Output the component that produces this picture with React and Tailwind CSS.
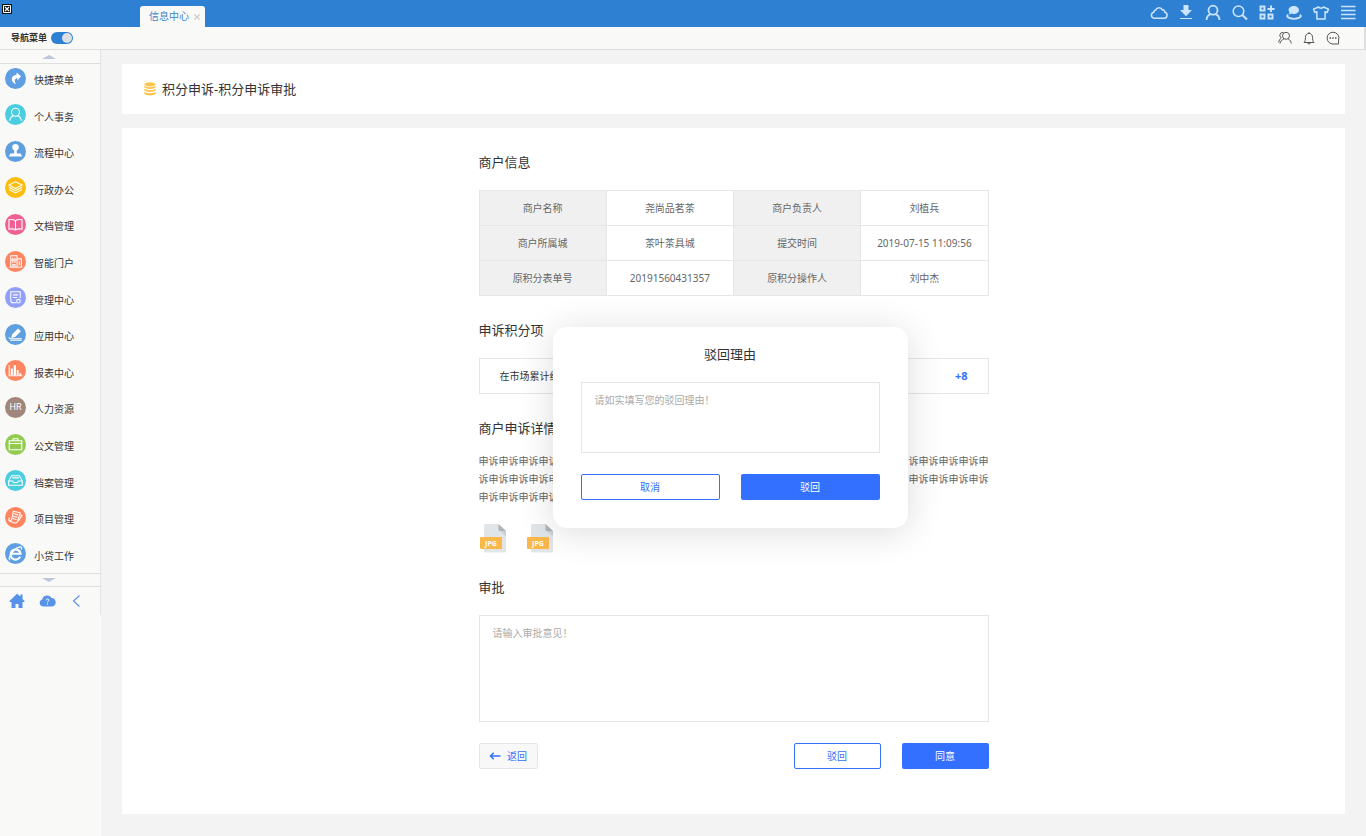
import { useState } from "react";

const ICON = "w-5 h-5";

const topActions = [
  {
    name: "云盘",
    art: (
      <path
        d="M5.2 15.200h9.900a3 3 0 0 0 .7-5.900 2 2 0 0 0-2.400-2.400A3.600 3.600 0 0 0 6.700 7a2.600 2.600 0 0 0-2 2.300 3 3 0 0 0 .5 5.900z"
        fill="none" strokeWidth="1.5"
      />
    ),
  },
  {
    name: "下载",
    art: (
      <>
        <path d="M7.5 2h5v5H16l-6 6.200L4 7h3.500z" fill="currentColor" stroke="none" />
        <path d="M4 15.500h12" fill="none" strokeWidth="1" />
      </>
    ),
  },
  {
    name: "用户",
    art: (
      <>
        <circle cx="10" cy="7.2" r="4.5" fill="none" strokeWidth="1.8" />
        <path d="M3.500 17c.2-3.200 1.900-5.200 4-5.700M16.500 17c-.2-3.200-1.900-5.200-4-5.700" fill="none" strokeWidth="1.8" />
      </>
    ),
  },
  {
    name: "搜索",
    art: (
      <>
        <circle cx="8.500" cy="8.300" r="5.300" fill="none" strokeWidth="1.5" />
        <path d="M12.500 12.300l4.500 4.200" fill="none" strokeWidth="2" />
      </>
    ),
  },
  {
    name: "应用",
    art: (
      <path
        d="M3.500 3.500h4v4h-4zM3.500 11.500h4v4h-4zM11.500 11.500h4v4h-4zM14 2.500v6.500M10.500 6h7"
        fill="none" strokeWidth="1.9"
      />
    ),
  },
  {
    name: "消息",
    art: (
      <>
        <path d="M9.800 3c3 0 5.200 1.700 5.200 4s-2.200 4-5.200 4c-.8 0-1.500-.1-2.200-.4l-3 .9 1-2A3.700 3.700 0 0 1 4.600 7c0-2.300 2.200-4 5.200-4z" fill="currentColor" stroke="none" />
        <path d="M4.200 11.800c-1.500.9-1.200 2 .4 2.800 3 1.400 7.800 1.400 10.800 0 1.600-.8 1.900-1.900.4-2.800" fill="none" strokeWidth="1.9" />
      </>
    ),
  },
  {
    name: "皮肤",
    art: (
      <path
        d="M7.400 4L2.500 6.200l1.400 3.300 2-.7V16h8.200V8.800l2 .7 1.400-3.300L12.600 4c-.9 1.500-4.300 1.500-5.200 0z"
        fill="none" strokeWidth="1.500" strokeLinejoin="round"
      />
    ),
  },
  {
    name: "菜单",
    art: <path d="M3 3.500h14.500M3 7.500h14.500M3 11.500h14.500M3 15.500h14.500" fill="none" strokeWidth="1.600" />,
  },
];

const subActions = [
  {
    name: "联系人",
    art: (
      <>
        <circle cx="11" cy="7.800" r="3.500" />
        <path d="M5 15.500c.3-2 1.700-3.700 4-4.500M13.200 11c2 .8 3 2.600 3 4.500M8.500 4.700C6.300 4 4.800 5.500 4.900 7.500c0 1 .6 2 1.400 2.500C4.900 11 3.900 12.600 3.700 14.500" />
      </>
    ),
  },
  {
    name: "提醒",
    art: (
      <path d="M5 14.500h10c-1.300-1.200-1.300-2.700-1.400-5-.1-2.600-1.500-4.100-3.600-4.100S6.500 6.900 6.400 9.500c-.1 2.300-.1 3.800-1.400 5zM8.600 14.900c.2 1.500 2.600 1.500 2.800 0M10 4v1.200" />
    ),
  },
  {
    name: "聊天",
    art: (
      <>
        <path d="M10 4.200a5.900 5.900 0 1 0 0 11.800h5.600v-4A5.900 5.900 0 0 0 10 4.200z" />
        <path d="M6.500 9.200H8v1.500H6.500zM9.200 9.200h1.500v1.500H9.200zM12 9.200h1.500v1.500H12z" fill="currentColor" stroke="none" />
      </>
    ),
  },
];

// artwork sits inside a 20x20 disc
const menu = [
  { label: "快捷菜单", bg: "bg-[#5e9fe3]", art: <path d="M11 4.200l4.300 3.600-3.500 4V9.500c-2.600.4-3.200 2.500-1.300 6-5.600-1.700-5.400-8.300.5-9z" fill="#fff" stroke="none" /> },
  { label: "个人事务", bg: "bg-[#4bcde0]", art: <><circle cx="10" cy="7.800" r="3.800" /><path d="M4.500 16c.2-2.600 1.500-4.300 3.500-4.900M15.500 16c-.2-2.600-1.500-4.300-3.500-4.900" /></> },
  { label: "流程中心", bg: "bg-[#5e9fe0]", art: <><circle cx="10" cy="6" r="3.100" fill="#fff" stroke="none" /><path d="M9 8h2l.4 4H15l1.200 2.800H3.800L5 12h3.600z" fill="#fff" stroke="none" /></> },
  { label: "行政办公", bg: "bg-[#fdbd0c]", art: <path d="M10 4.500l6.300 3.200L10 11 3.700 7.700zM3.700 9.700L10 13l6.300-3.300M3.700 11.900L10 15.200l6.300-3.300" /> },
  { label: "文档管理", bg: "bg-[#ef6093]", art: <path d="M10 6.300C8.200 5 5.800 5 3.800 5.500v9c2-.5 4.400-.5 6.200.7 1.800-1.200 4.200-1.200 6.200-.7v-9C14.200 5 11.800 5 10 6.300zM10 6.300v8.900" /> },
  { label: "智能门户", bg: "bg-[#ff8460]", art: <path d="M5.500 15.500v-11h6v11M11.500 7.500h4v8M4 15.500h12.500M7.500 6.500v5M9.500 6.500v5M6 8.500h5M7.500 15v-2h2v2M13.500 9.500v4" /> },
  { label: "管理中心", bg: "bg-[#909ffb]", art: <><path d="M14.500 10.500v-6h-9v8c0 1.600.8 2.500 2.300 2.500h3M7.500 7.500h5M7.500 10h4" /><circle cx="12.800" cy="13.500" r="1.700" /></> },
  { label: "应用中心", bg: "bg-[#5e9fe0]", art: <><path d="M12.400 4.200l2.800 2.700-5.500 5.500-3.800 1 1-3.700z" fill="#fff" stroke="none" /><path d="M4 12.500c-.5 2 1.500 1.500 3 1.500h9M5 15.500h11" /></> },
  { label: "报表中心", bg: "bg-[#ff8460]", art: <><path d="M4 5v10h12.500" /><path d="M5.500 8h2v6.500h-2zM8.300 5h2.200v9.500H8.300zM11.200 9.500H13v5h-1.800zM13.700 12.500h1.700v2h-1.700z" fill="#fff" stroke="none" /></> },
  { label: "人力资源", bg: "bg-[#a1867c]", text: "HR" },
  { label: "公文管理", bg: "bg-[#93cb50]", art: <path d="M4 6.500h12v8.500H4zM4 9h12M7.700 6.300V4.500h4.600v1.800" /> },
  { label: "档案管理", bg: "bg-[#4bcde0]", art: <path d="M6.200 5.500h7.600l2.700 5v4h-13v-4zM3.700 10.500h3.600c.5 2 4.900 2 5.400 0h3.600M6.800 7.500h6.400" /> },
  { label: "项目管理", bg: "bg-[#ff8460]", art: <path d="M8 4l6.500 1.500-2.500 8c-.6 1.900-2 1.900-3.500 1.400l-5-1.700c1.800.2 2.700-.8 3-2zM8.500 6.500l4 1M7.800 8.700l4 1M7.200 10.900l3.800 1M4 10l-.5 3.200M12.500 13.500L16.200 8l-1.500-.6" /> },
  { label: "小贷工作", bg: "bg-[#5e9fe3]", art: <><path d="M14.500 13a4.800 4.800 0 1 1 .4-2.700H6.500" strokeWidth="2" /><path d="M4.800 16.200C2 15.500 7.500 6 13.500 4c2.200-.7 2.700.5 2 2.300" strokeWidth="1.200" /></> },
];

const merchant = [
  ["商户名称", "尧尚品茗茶", "商户负责人", "刘植兵"],
  ["商户所属城", "茶叶茶具城", "提交时间", "2019-07-15 11:09:56"],
  ["原积分表单号", "20191560431357", "原积分操作人", "刘中杰"],
];

const detail = "申诉".repeat(55);

function TopBar() {
  return (
    <header className="flex h-[27px] items-start justify-between bg-[#2e80d2] pr-2">
      <div className="flex h-full">
        <div className="w-[140px] pt-1 pl-[2px]">
          <svg viewBox="0 0 10 10" className="h-[10px] w-[10px]" aria-hidden="true">
            <path d="M0 0h10v10H0z" fill="#111" />
            <path d="M1.500 1.500h7v7h-7z" fill="none" stroke="#fff" />
            <path d="M3 3l4 4M7 3L3 7" stroke="#fff" strokeWidth="1.2" />
          </svg>
        </div>
        <div className="mt-[6px] flex w-[65px] items-center justify-between rounded-t-[3px] bg-[#f9f9f7] pr-[5px] pl-[9px]">
          <a href="#info" className="text-[10px] whitespace-nowrap text-[#3d84d0]">信息中心</a>
          <button type="button" aria-label="关闭" className="text-[#cccccc]">
            <svg viewBox="0 0 6 6" className="h-[6px] w-[6px]">
              <path d="M.5.5l5 5M5.500.5l-5 5" stroke="currentColor" strokeWidth="1.2" />
            </svg>
          </button>
        </div>
      </div>
      <div className="flex gap-[7px] pt-[3px] text-[#cbe5ff]">
        {topActions.map((a) => (
          <button key={a.name} type="button" aria-label={a.name}>
            <svg viewBox="0 0 20 20" className={ICON} stroke="currentColor">{a.art}</svg>
          </button>
        ))}
      </div>
    </header>
  );
}

function SubBar() {
  const [on, setOn] = useState(true);
  return (
    <div className="flex h-[23px] items-center justify-between border-r-2 border-b border-r-[#dedede] border-b-[#dedede] bg-[#f9f9f7] pr-[21px] pl-[11px]">
      <label className="flex items-center gap-1 text-[9px] font-bold text-[#333]">
        导航菜单
        <input
          type="checkbox"
          checked={on}
          onChange={(e) => setOn(e.target.checked)}
          className="sr-only"
        />
        <span className={`flex h-3 w-[22px] rounded-full p-px ${on ? "justify-end bg-[#2e80d2]" : "justify-start bg-[#bbb]"}`}>
          <span className="h-[10px] w-[10px] rounded-full bg-[#dcdfe4]" />
        </span>
      </label>
      <div className="flex gap-1 text-[#555]">
        {subActions.map((a) => (
          <button key={a.name} type="button" aria-label={a.name}>
            <svg viewBox="0 0 20 20" className={ICON} fill="none" stroke="currentColor">{a.art}</svg>
          </button>
        ))}
      </div>
    </div>
  );
}

function Sidebar() {
  return (
    <aside className="w-[101px] shrink-0 bg-[#f9f9f7]">
      <div className="border-r border-[#e4e4e4]">
        <button type="button" aria-label="向上" className="flex h-[14px] w-full items-center border-b border-[#dedede] pl-[42px] text-[#bcc8da]">
          <svg viewBox="0 0 14 4" className="h-1 w-[14px]"><path d="M0 4l7-4 7 4z" fill="currentColor" /></svg>
        </button>
        <nav>
          <ul className="flex h-[509px] flex-col justify-between pb-[5px]">
            {menu.map((m) => (
              <li key={m.label}>
                <a href="#menu" className="flex h-7 items-center gap-2 pl-[5px]">
                  <span className={`flex h-[21px] w-[21px] items-center justify-center rounded-full ${m.bg}`}>
                    {m.text ? (
                      <span className="font-['Roboto',sans-serif] text-[9px] leading-none text-white">{m.text}</span>
                    ) : (
                      <svg viewBox="0 0 20 20" className="h-[21px] w-[21px]" fill="none" stroke="#fff">{m.art}</svg>
                    )}
                  </span>
                  <span className="mt-1 text-[10px] leading-4 text-[#333]">{m.label}</span>
                </a>
              </li>
            ))}
          </ul>
        </nav>
        <button type="button" aria-label="向下" className="flex h-[14px] w-full items-center border-y border-[#dedede] pl-[42px] text-[#bcc8da]">
          <svg viewBox="0 0 14 4" className="h-1 w-[14px]"><path d="M0 0l7 4 7-4z" fill="currentColor" /></svg>
        </button>
        <div className="flex h-[28px] items-center gap-[14px] pl-[9px] text-[#5592e8]">
          <button type="button" aria-label="首页">
            <svg viewBox="0 0 16 16" className="h-4 w-4">
              <path d="M8 .8L.2 8.200l1 .8h1.300v6h4v-4h3v4h4V9h1.300l1-.8-2.300-2.200V1.500h-2v2.100z" fill="currentColor" />
            </svg>
          </button>
          <button type="button" aria-label="帮助">
            <svg viewBox="0 0 17 16" className="h-4 w-[17px]">
              <path d="M4 13.500a3.600 3.600 0 0 1-.8-7A5.200 5.200 0 0 1 12.700 5a4.300 4.300 0 0 1 .5 8.500z" fill="currentColor" />
              <path d="M7 7.300c.1-2 3.300-1.700 2.900.1-.2.8-1.400 1-1.400 2M8.500 10.500v1.200" fill="none" stroke="#fff" />
            </svg>
          </button>
          <button type="button" aria-label="收起">
            <svg viewBox="0 0 16 16" className="h-4 w-4">
              <path d="M9.500 2.500L3.500 8l6 5.500" fill="none" stroke="currentColor" strokeWidth="1.1" />
            </svg>
          </button>
        </div>
      </div>
    </aside>
  );
}

function Heading({ children }) {
  return <h2 className="text-[13px] leading-5 text-[#333]">{children}</h2>;
}

function JpgFile() {
  return (
    <a href="#attachment" aria-label="附件">
      <svg viewBox="0 0 27 29" className="h-[29px] w-[27px]">
        <path d="M5.500 0h13L26 7v20a1.500 1.500 0 0 1-1.500 1.500h-19A1.500 1.500 0 0 1 4 27V1.500A1.500 1.500 0 0 1 5.500 0z" fill="#e1e5e8" />
        <path d="M20 7h6v5.500z" fill="#cbd0d5" />
        <path d="M18.500 0L26 7h-6a1.500 1.500 0 0 1-1.500-1.500z" fill="#adb4ba" />
        <rect x="0" y="13" width="22" height="12" rx="1" fill="#f8b84a" />
        <text x="11" y="21.500" textAnchor="middle" fontSize="7" fontWeight="700" fontFamily="Open Sans, sans-serif" fill="#fff">JPG</text>
      </svg>
    </a>
  );
}

function RejectDialog() {
  return (
    <div
      role="dialog"
      aria-labelledby="reject-title"
      className="absolute top-[175px] left-[74px] w-[355px] rounded-[14px] bg-white px-7 pt-[17px] pb-7 shadow-[0_4px_36px_rgba(0,0,0,0.14)]"
    >
      <h2 id="reject-title" className="text-center text-[13px] leading-5 text-[#333]">驳回理由</h2>
      <textarea
        aria-label="驳回理由"
        placeholder="请如实填写您的驳回理由！"
        className="mt-[18px] block h-[71px] w-full resize-none border border-[#e6e6e6] px-[13px] py-[9px] text-[10px] leading-4 placeholder:text-[#aaa]"
      />
      <div className="mt-[21px] grid grid-cols-2 gap-[21px] text-[10px]">
        <button type="button" className="h-[26px] rounded-[2px] border border-[#3470ff] text-[#3470ff]">取消</button>
        <button type="button" className="h-[26px] rounded-[2px] bg-[#3470ff] text-white">驳回</button>
      </div>
    </div>
  );
}

export default function App() {
  return (
    <div lang="zh-CN" className="flex min-h-screen flex-col bg-[#f3f3f3] font-['Noto_Sans','Noto_Sans_CJK_SC',sans-serif]">
      <TopBar />
      <SubBar />
      <div className="flex flex-1">
        <Sidebar />
        <main className="flex min-w-0 flex-1 flex-col gap-[14px] px-[21px] pt-[14px] pb-[22px]">
          <div className="flex h-[50px] items-center gap-[6px] bg-white pl-[22px]">
            <svg viewBox="0 0 12 14" className="h-[14px] w-3" aria-hidden="true">
              <g fill="#fdc44b">
                <ellipse cx="6" cy="2.300" rx="5.700" ry="2" />
                <path d="M.3 3.800c1.500 1.900 9.900 1.900 11.400 0v1.700c-1.500 1.900-9.900 1.900-11.400 0z" />
                <path d="M.3 6.800c1.500 1.900 9.900 1.900 11.400 0v1.700c-1.500 1.900-9.900 1.900-11.400 0z" />
                <path d="M.3 9.800c1.500 1.900 9.900 1.900 11.400 0v2c-1.500 2.300-9.900 2.300-11.400 0z" />
              </g>
            </svg>
            <h1 className="text-[13px] leading-5 text-[#333]">积分申诉-积分申诉审批</h1>
          </div>

          <div className="flex-1 bg-white pt-6 pb-10">
            <div className="relative mx-auto w-[510px]">
              <Heading>商户信息</Heading>
              <table className="mt-[18px] w-full table-fixed border-collapse text-center text-[10px] text-[#666]">
                <tbody>
                  {merchant.map(([k1, v1, k2, v2]) => (
                    <tr key={k1} className="h-[35px]">
                      <th scope="row" className="border border-[#e6e6e6] bg-[#f0f0f0] font-normal">{k1}</th>
                      <td className="border border-[#e6e6e6]">{v1}</td>
                      <th scope="row" className="border border-[#e6e6e6] bg-[#f0f0f0] font-normal">{k2}</th>
                      <td className="border border-[#e6e6e6]">{v2}</td>
                    </tr>
                  ))}
                </tbody>
              </table>

              <div className="mt-6">
                <Heading>申诉积分项</Heading>
              </div>
              <div className="mt-[18px] flex h-9 items-center justify-between border border-[#e6e6e6] px-5 text-[10px]">
                <span className="text-[#333]">在市场累计组</span>
                <span className="text-[11px] font-bold text-[#3470ff]">+8</span>
              </div>

              <div className="mt-6">
                <Heading>商户申诉详情</Heading>
              </div>
              <p className="mt-[14px] text-[10px] leading-[18px] break-all text-[#666]">{detail}</p>
              <div className="mt-[18px] flex gap-5 pl-px">
                <JpgFile />
                <JpgFile />
              </div>

              <div className="mt-6">
                <Heading>审批</Heading>
              </div>
              <textarea
                aria-label="审批"
                placeholder="请输入审批意见！"
                className="mt-[18px] block h-[107px] w-full resize-none border border-[#e6e6e6] px-[13px] py-[9px] text-[10px] leading-4 placeholder:text-[#aaa]"
              />
              <div className="mt-[21px] flex text-[10px]">
                <button type="button" className="flex h-[26px] w-[59px] items-center justify-center gap-[6px] rounded-[2px] border border-[#e6e6e6] bg-[#f8f8f8] text-[#3470ff]">
                  <svg viewBox="0 0 12 10" className="h-[10px] w-3" aria-hidden="true">
                    <path d="M11.500 5h-10M4.700 1.800L1.500 5l3.200 3.200" fill="none" stroke="currentColor" strokeWidth="1.5" />
                  </svg>
                  返回
                </button>
                <button type="button" className="ml-auto h-[26px] w-[87px] rounded-[2px] border border-[#3470ff] text-[#3470ff]">驳回</button>
                <button type="button" className="ml-[21px] h-[26px] w-[87px] rounded-[2px] bg-[#3470ff] text-white">同意</button>
              </div>

              <RejectDialog />
            </div>
          </div>
        </main>
      </div>
    </div>
  );
}
